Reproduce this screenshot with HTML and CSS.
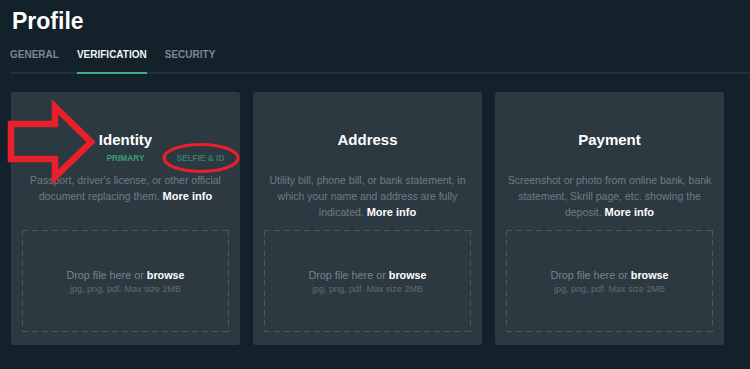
FILE: index.html
```html
<!DOCTYPE html>
<html lang="en">
<head>
<meta charset="utf-8">
<title>Profile</title>
<link rel="stylesheet" href="styles.css">
</head>
<body>
<div class="page">
  <h1 class="title">Profile</h1>
  <nav class="tabs">
    <a class="tab">GENERAL</a>
    <a class="tab active">VERIFICATION</a>
    <a class="tab">SECURITY</a>
  </nav>
  <div class="cards">
    <section class="card">
      <h2 class="card-title">Identity</h2>
      <div class="tags">
        <span></span>
        <span class="tag primary">PRIMARY</span>
        <span class="tag secondary">SELFIE &amp; ID</span>
      </div>
      <p class="desc">Passport, driver's license, or other official document replacing them. <b>More info</b></p>
      <div class="drop">
        <div class="drop-main">Drop file here or <b>browse</b></div>
        <div class="drop-sub">jpg, png, pdf. Max size 2MB</div>
      </div>
    </section>
    <section class="card">
      <h2 class="card-title">Address</h2>
      <div class="tags"></div>
      <p class="desc">Utility bill, phone bill, or bank statement, in which your name and address are fully indicated. <b>More info</b></p>
      <div class="drop">
        <div class="drop-main">Drop file here or <b>browse</b></div>
        <div class="drop-sub">jpg, png, pdf. Max size 2MB</div>
      </div>
    </section>
    <section class="card">
      <h2 class="card-title">Payment</h2>
      <div class="tags"></div>
      <p class="desc">Screenshot or photo from online bank, bank statement, Skrill page, etc. showing the deposit. <b>More info</b></p>
      <div class="drop">
        <div class="drop-main">Drop file here or <b>browse</b></div>
        <div class="drop-sub">jpg, png, pdf. Max size 2MB</div>
      </div>
    </section>
  </div>
  <svg class="annot" width="250" height="190" viewBox="0 0 250 190" aria-hidden="true">
    <path d="M11 124 H55 V107 L91 142 L55 177 V159 H11 Z" fill="none" stroke="#e8202b" stroke-width="6.5" stroke-linejoin="miter"/>
    <ellipse cx="201" cy="158" rx="37" ry="13.5" fill="none" stroke="#e8202b" stroke-width="3.2"/>
  </svg>
</div>
</body>
</html>
```
FILE: styles.css
```css
* { box-sizing: border-box; }
html, body { margin: 0; padding: 0; }
body {
  background: #13212a;
  font-family: "Liberation Sans", Arial, sans-serif;
  width: 750px;
  height: 369px;
  overflow: hidden;
}
.page {
  position: relative;
  padding: 8px 0 0 11px;
}
.title {
  margin: 0 0 0 1px;
  font-size: 23px;
  line-height: 26px;
  font-weight: bold;
  color: #ffffff;
}
.tabs {
  display: flex;
  gap: 18px;
  margin-top: 15px;
  margin-left: -1px;
  border-bottom: 2px solid #222f38;
}
.tab {
  font-size: 10px;
  line-height: 12px;
  font-weight: bold;
  color: #7a878f;
  padding-bottom: 11px;
  margin-bottom: -2px;
  border-bottom: 2px solid transparent;
}
.tab.active {
  color: #f2f4f5;
  border-bottom-color: #3fae87;
}
.cards {
  display: grid;
  grid-template-columns: 229px 229px 229px;
  gap: 13px;
  margin-top: 18px;
}
.card {
  background: #2c3941;
  border-radius: 3px;
  padding: 39px 11px 13px;
  display: flex;
  flex-direction: column;
  text-align: center;
}
.card-title {
  margin: 0;
  font-size: 15px;
  line-height: 18px;
  font-weight: bold;
  color: #ffffff;
}
.tags {
  display: grid;
  grid-template-columns: 1fr auto 1fr;
  height: 12px;
  margin-top: 3px;
  font-size: 8.3px;
  line-height: 12px;
  font-weight: bold;
}
.tag.primary { color: #3a9f72; }
.tag.secondary {
  color: #3e7a68;
  text-align: left;
  margin-left: 32px;
}
.desc {
  margin: 8px -2px 0;
  font-size: 10.5px;
  line-height: 16px;
  color: #6f7c84;
  height: 48px;
}
.desc b { color: #ffffff; font-size: 11px; }
.drop {
  margin-top: 10px;
  height: 102px;
  background:
    repeating-linear-gradient(90deg, #4a5861 0 6px, transparent 6px 10px) left top / 100% 1px no-repeat,
    repeating-linear-gradient(90deg, #4a5861 0 6px, transparent 6px 10px) left bottom / 100% 1px no-repeat,
    repeating-linear-gradient(180deg, #4a5861 0 6px, transparent 6px 10px) left top / 1px 100% no-repeat,
    repeating-linear-gradient(180deg, #4a5861 0 6px, transparent 6px 10px) right top / 1px 100% no-repeat;
  display: flex;
  flex-direction: column;
  align-items: center;
  justify-content: center;
  padding-top: 2px;
}
.drop-main {
  font-size: 10.8px;
  line-height: 14px;
  color: #77848c;
}
.drop-main b { color: #ffffff; }
.drop-sub {
  font-size: 9px;
  line-height: 14px;
  color: #5f6c74;
}
.annot {
  position: absolute;
  left: 0;
  top: 0;
  pointer-events: none;
}
```
